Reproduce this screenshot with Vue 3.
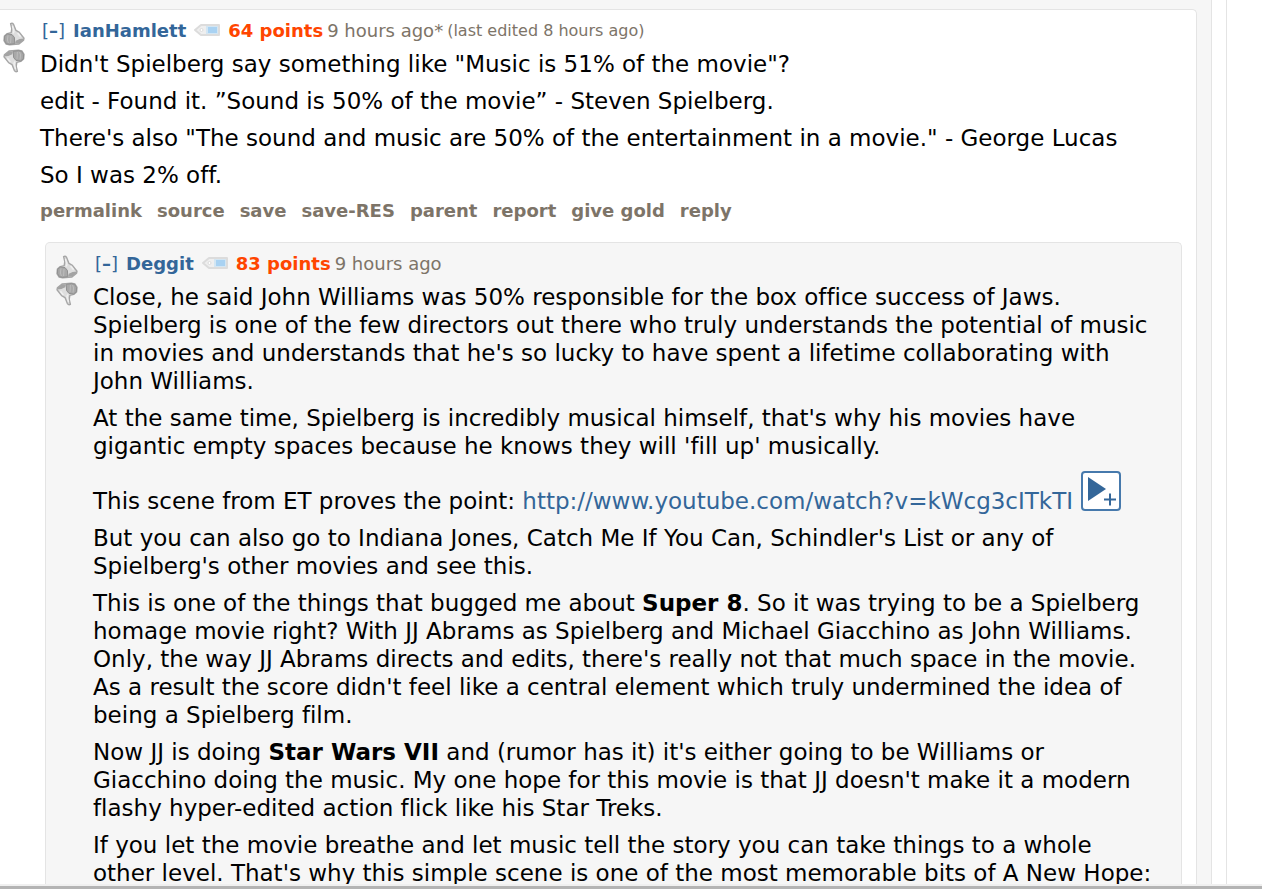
<template>
    <div class="page">
        <svg class="defs" aria-hidden="true">
            <defs>
                <symbol id="thumb" viewBox="0 0 22 24">
                    <path
                        d="M7.6 1.6 Q9.4 0.6 10.6 2.4 L13 8.4 L16.4 10.4 L21 16.2 L20.6 18.2 L16 22 L6.6 22.8 L3 22 L1 18.6 L1.4 14 L4.2 11.6 L8.2 10.6 L8.8 6.6 Z"
                        fill="#dedede"
                        stroke="#a6a6a6"
                        stroke-width="1.4"
                        stroke-linejoin="round"
                    />
                    <path
                        d="M1.6 14.4 L4.4 12 L9 12.6 L11.4 15.4 L11.8 21.6 L6.6 22.4 L3.4 21.6 L1.6 18.6 Z"
                        fill="#a8a8a8"
                        stroke="#8f8f8f"
                        stroke-linejoin="round"
                    />
                    <path
                        d="M5 13.4 L4.4 18 L5.4 21 M8 14 L7.6 21"
                        fill="none"
                        stroke="#bdbdbd"
                        stroke-width="1"
                    />
                    <path d="M12 21.6 L12.8 18.8 L16.6 17 L20.6 16.4 L20.4 18.2 L16 21.8 Z" fill="#a3a3a3" />
                    <path d="M9.4 4 L11 9.4 L10.2 11.6 M14.6 11 L17.6 14.8" fill="none" stroke="#f0f0f0" stroke-width="1.4" />
                </symbol>
                <symbol id="tag" viewBox="0 0 28 14">
                    <path
                        d="M2 7 L8 2 H26 V12 H8 Z"
                        fill="#efefef"
                        stroke="#dcdcdc"
                        stroke-width="2"
                        stroke-linejoin="round"
                    />
                    <circle cx="8.5" cy="7" r="1.5" fill="#ffffff" stroke="#dcdcdc" />
                    <rect x="13" y="3" width="12" height="8" fill="#d3e6f3" />
                    <rect x="15" y="4" width="9" height="6" fill="#a9d2f2" />
                </symbol>
            </defs>
        </svg>

        <div class="viewport">
            <main class="listing">
                <article class="comment">
                    <div class="votes">
                        <button class="vote" type="button" aria-label="upvote">
                            <svg><use href="#thumb" /></svg>
                        </button>
                        <button class="vote down" type="button" aria-label="downvote">
                            <svg><use href="#thumb" /></svg>
                        </button>
                    </div>
                    <div class="entry">
                        <p class="tagline">
                            <a href="#" class="expand">[<b>–</b>]</a>
                            <a href="#" class="author">IanHamlett</a>
                            <a href="#" class="tag" aria-label="tag user"><svg><use href="#tag" /></svg></a>
                            <span class="score">64 points</span>
                            <time>9 hours ago*</time>
                            <span class="edited">(last edited 8 hours ago)</span>
                        </p>
                        <div class="body">
                            <p>Didn't Spielberg say something like "Music is 51% of the movie"?</p>
                            <p>edit - Found it. ”Sound is 50% of the movie” - Steven Spielberg.</p>
                            <p>There's also "The sound and music are 50% of the entertainment in a movie." - George Lucas</p>
                            <p>So I was 2% off.</p>
                        </div>
                        <ul class="buttons">
                            <li v-for="action in actions" :key="action">
                                <a href="#">{{ action }}</a>
                            </li>
                        </ul>
                    </div>
                </article>

                <div class="replies">
                    <article class="comment child">
                        <div class="votes">
                            <button class="vote" type="button" aria-label="upvote">
                                <svg><use href="#thumb" /></svg>
                            </button>
                            <button class="vote down" type="button" aria-label="downvote">
                                <svg><use href="#thumb" /></svg>
                            </button>
                        </div>
                        <div class="entry">
                            <p class="tagline">
                                <a href="#" class="expand">[<b>–</b>]</a>
                                <a href="#" class="author">Deggit</a>
                                <a href="#" class="tag" aria-label="tag user"><svg><use href="#tag" /></svg></a>
                                <span class="score">83 points</span>
                                <time>9 hours ago</time>
                            </p>
                            <div class="body">
                                <p>
                                    Close, he said John Williams was 50% responsible for the box office success of Jaws.<br />
                                    Spielberg is one of the few directors out there who truly understands the potential of music<br />
                                    in movies and understands that he's so lucky to have spent a lifetime collaborating with<br />
                                    John Williams.
                                </p>
                                <p>
                                    At the same time, Spielberg is incredibly musical himself, that's why his movies have<br />
                                    gigantic empty spaces because he knows they will 'fill up' musically.
                                </p>
                                <p>
                                    This scene from ET proves the point:
                                    <a href="http://www.youtube.com/watch?v=kWcg3cITkTI">http://www.youtube.com/watch?v=kWcg3cITkTI</a>
                                    <button class="expando" type="button" aria-label="play video">
                                        <svg viewBox="0 0 40 40">
                                            <rect x="1" y="1" width="38" height="38" rx="3" fill="#fff" stroke="#4679ac" stroke-width="2" />
                                            <path d="M7 6 L25 18 L7 30 Z" fill="#336699" />
                                            <path d="M23 28.5 H35 M29 22.5 V34.5" stroke="#336699" stroke-width="2" />
                                        </svg>
                                    </button>
                                </p>
                                <p>
                                    But you can also go to Indiana Jones, Catch Me If You Can, Schindler's List or any of<br />
                                    Spielberg's other movies and see this.
                                </p>
                                <p>
                                    This is one of the things that bugged me about <strong>Super 8</strong>. So it was trying to be a Spielberg<br />
                                    homage movie right? With JJ Abrams as Spielberg and Michael Giacchino as John Williams.<br />
                                    Only, the way JJ Abrams directs and edits, there's really not that much space in the movie.<br />
                                    As a result the score didn't feel like a central element which truly undermined the idea of<br />
                                    being a Spielberg film.
                                </p>
                                <p>
                                    Now JJ is doing <strong>Star Wars VII</strong> and (rumor has it) it's either going to be Williams or<br />
                                    Giacchino doing the music. My one hope for this movie is that JJ doesn't make it a modern<br />
                                    flashy hyper-edited action flick like his Star Treks.
                                </p>
                                <p>
                                    If you let the movie breathe and let music tell the story you can take things to a whole<br />
                                    other level. That's why this simple scene is one of the most memorable bits of A New Hope:
                                </p>
                            </div>
                        </div>
                    </article>
                </div>
            </main>
        </div>
        <div class="scroll-edge"></div>
    </div>
</template>

<script setup>
const actions = ['permalink', 'source', 'save', 'save-RES', 'parent', 'report', 'give gold', 'reply']
</script>

<style>
body {
    margin: 0;
    background: #fff;
}
</style>

<style scoped>
.page {
    display: flex;
    flex-direction: column;
    height: 100vh;
    overflow: hidden;
    font-family: Verdana, "DejaVu Sans", sans-serif;
    font-variant-ligatures: none;
    color: #000;
}

.defs {
    position: absolute;
    width: 0;
    height: 0;
}

.viewport {
    flex: 1;
    min-height: 0;
    overflow: hidden;
    margin-right: 35px;
    padding-right: 14px;
    border-right: 1px solid #e4e4e4;
}

/* grey parent comment that holds the white thread */
.listing {
    padding: 9px 14px 0 0;
    border-right: 1px solid #e4e4e4;
    background: #f6f6f6;
}

.comment {
    display: flex;
    border: 1px solid #e4e4e4;
    border-left: none;
    border-bottom: none;
    border-top-right-radius: 5px;
    background: #fff;
    padding: 9px 0 18px 3px;
}

.replies {
    padding: 0 14px 0 45px;
    border-right: 1px solid #e4e4e4;
    background: #fff;
}

.child {
    border-left: 1px solid #e4e4e4;
    border-radius: 5px 5px 0 0;
    background: #f6f6f6;
    padding-left: 10px;
}

.votes {
    flex: none;
    display: flex;
    flex-direction: column;
    gap: 3px;
    width: 37px;
    padding-top: 3px;
}

.vote {
    width: 22px;
    height: 24px;
    padding: 0;
    border: none;
    background: none;
    cursor: pointer;
}

.vote svg {
    display: block;
    width: 22px;
    height: 24px;
}

.down svg {
    transform: rotate(180deg);
}

.entry {
    flex: 1;
    min-width: 0;
}

.tagline {
    display: flex;
    align-items: center;
    gap: 4px;
    height: 22px;
    margin: 0;
    font-size: 18px;
    color: #7d7468;
    white-space: nowrap;
}

a {
    color: #336699;
    text-decoration: none;
}

.expand {
    padding: 0 4px 0 2px;
}

.author,
.score {
    font-weight: bold;
}

.score {
    color: #ff4500;
}

.tag {
    padding: 0 3px;
}

.tag svg {
    display: block;
    width: 28px;
    height: 14px;
}

.edited {
    font-size: 16px;
}

.body {
    padding-top: 9px;
    font-size: 23px;
    line-height: 28px;
    white-space: nowrap;
}

.body p {
    margin: 0 0 9px;
}

.expando {
    width: 40px;
    height: 40px;
    margin: 2px 0 0 8px;
    padding: 0;
    border: none;
    background: none;
    vertical-align: -2px;
    cursor: pointer;
}

.expando svg {
    display: block;
    width: 40px;
    height: 40px;
}

.buttons {
    display: flex;
    gap: 15px;
    margin: 0;
    padding: 0;
    list-style: none;
    font-size: 18px;
    font-weight: bold;
    line-height: 26px;
}

.buttons a {
    color: #7d7468;
}

.scroll-edge {
    flex: none;
    height: 3px;
    border-top: 2px solid #f0f0f0;
    background: #b4b4b4;
}
</style>
